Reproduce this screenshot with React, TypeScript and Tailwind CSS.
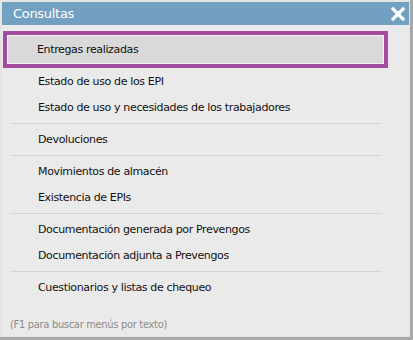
import React from "react";

const font = { fontFamily: '"DejaVu Sans", Verdana, sans-serif', letterSpacing: "-0.36px" };

function Row({ label }: { label: string }) {
  return (
    <div className="h-[26px] flex items-center pt-px pl-[36px] text-[11px] text-[#111]" style={font}>
      {label}
    </div>
  );
}

function Sep() {
  return (
    <div className="h-[6px] pt-[2px]">
      <div className="ml-[8px] w-[372px] h-px bg-[#d4d4d4]" />
    </div>
  );
}

export default function App() {
  return (
    <div className="w-[413px] h-[340px] bg-[#a9a9a9] pr-[3px] pb-[3px]">
      <div className="w-full h-full bg-[#e4e4e4] pt-[2px] pl-[2px] pr-px pb-px flex flex-col">
        <div className="h-[23px] bg-[#72a0c0] flex items-center justify-between pl-[11px] pr-[4px]">
          <span
            className="text-white text-[13px] pt-px"
            style={{ fontFamily: '"DejaVu Sans", Verdana, sans-serif', letterSpacing: "-0.3px" }}
          >
            Consultas
          </span>
          <svg width="14" height="14" viewBox="0 0 14 14">
            <path d="M2 2 L12 12 M12 2 L2 12" stroke="#fff" strokeWidth="3.2" strokeLinecap="square" />
          </svg>
        </div>
        <div className="flex-1 bg-[#eaeaea] flex flex-col">
          <div className="mt-[6px] ml-px w-[385px] h-[37px] border-4 border-[#a34c9f] mb-px">
            <div
              className="w-full h-full border border-[#f4f4f4] bg-[#d9d9d9] flex items-center pt-px pl-[29px] text-[11px] text-[#111]"
              style={font}
            >
              Entregas realizadas
            </div>
          </div>
          <Row label="Estado de uso de los EPI" />
          <Row label="Estado de uso y necesidades de los trabajadores" />
          <Sep />
          <Row label="Devoluciones" />
          <Sep />
          <Row label="Movimientos de almacén" />
          <Row label="Existencia de EPIs" />
          <Sep />
          <Row label="Documentación generada por Prevengos" />
          <Row label="Documentación adjunta a Prevengos" />
          <Sep />
          <Row label="Cuestionarios y listas de chequeo" />
          <div className="flex-1 flex items-end pl-[8px] pb-[3px]">
            <span
              className="text-[11px] text-[#8a8a8a]"
              style={{
                fontFamily: '"DejaVu Sans Condensed", "Liberation Sans Narrow", "Liberation Sans", sans-serif',
                letterSpacing: "-0.3px",
              }}
            >
              (F1 para buscar menús por texto)
            </span>
          </div>
        </div>
      </div>
    </div>
  );
}
